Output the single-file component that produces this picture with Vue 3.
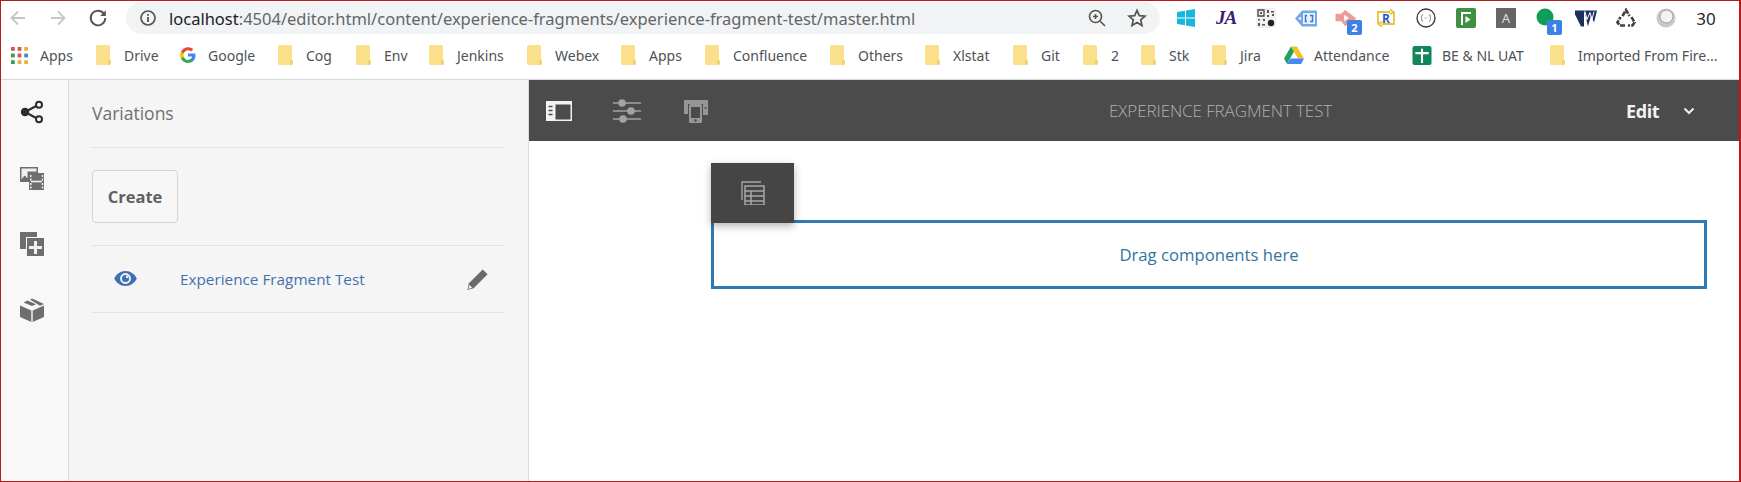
<script setup>
const bookmarks = [
  { label: 'Apps', icon: 'apps', w: 34 },
  { label: 'Drive', w: 34 },
  { label: 'Google', icon: 'g', w: 48 },
  { label: 'Cog', w: 28 },
  { label: 'Env', w: 23 },
  { label: 'Jenkins', w: 48 },
  { label: 'Webex', w: 44 },
  { label: 'Apps', w: 34 },
  { label: 'Confluence', w: 75 },
  { label: 'Others', w: 45 },
  { label: 'Xlstat', w: 38 },
  { label: 'Git', w: 20 },
  { label: '2', w: 8 },
  { label: 'Stk', w: 21 },
  { label: 'Jira', w: 22 },
  { label: 'Attendance', icon: 'drive', w: 76 },
  { label: 'BE & NL UAT', icon: 'sheet', w: 86 },
  { label: 'Imported From Fire...', w: 142 }
]
</script>

<template>
  <div class="frame">
    <header class="toolbar">
      <div class="nav">
        <svg class="nav-icon" viewBox="0 0 20 20"><path d="M17 10H4M10 3.5 3.5 10l6.500 6.500" fill="none" stroke="#c4c7c9" stroke-width="1.800" /></svg>
        <svg class="nav-icon" viewBox="0 0 20 20"><path d="M3 10h13M10 3.500l6.500 6.500-6.500 6.500" fill="none" stroke="#c4c7c9" stroke-width="1.800" /></svg>
        <svg class="nav-icon" viewBox="0 0 20 20"><path d="M16.400 6.500A7.300 7.300 0 1 0 17.300 10" fill="none" stroke="#555" stroke-width="1.900" /><path d="M17.800 2.300v5.600h-5.600z" fill="#555" /></svg>
      </div>
      <div class="omnibox">
        <svg class="info" viewBox="0 0 18 18"><circle cx="9" cy="9" r="7" fill="none" stroke="#555" stroke-width="1.700" /><path d="M9 8v5M9 5v1.800" stroke="#555" stroke-width="1.800" /></svg>
        <span class="url"><b>localhost</b>:4504/editor.html/content/experience-fragments/experience-fragment-test/master.html</span>
        <svg class="zoom-icon" viewBox="0 0 20 20"><circle cx="8.500" cy="8.500" r="6" fill="none" stroke="#555" stroke-width="1.600" /><path d="m13 13 5 5M6 8.500h5M8.500 6v5" stroke="#555" stroke-width="1.600" /></svg>
        <svg class="star" viewBox="0 0 20 20"><path d="m10 2.300 2.300 5.300 5.700.5-4.300 3.800 1.300 5.600-5-3-5 3 1.300-5.600L2 8.100l5.700-.5z" fill="none" stroke="#555" stroke-width="1.700" /></svg>
      </div>
      <div class="extensions">
        <span class="ext"><svg viewBox="0 0 20 20" class="e20"><path d="m1 4 8-1.300V9.500H1zM10 2.500 19 1v8.500h-9zM1 10.500h8v6.800L1 16zM10 10.500h9V19l-9-1.500z" fill="#19b6e0" /></svg></span>
        <span class="ext"><span class="ja">JA</span></span>
        <span class="ext"><svg viewBox="0 0 20 20" class="e20"><rect width="20" height="20" rx="2" fill="#f0f0f0" /><path d="M2 2h6v6H2z" fill="none" stroke="#444" stroke-width="1.300" /><path d="M4 4h2v2H4zM11 2h2v3h-2zM15 3h3v1.500h-3zM16 6h2v2h-2zM11 7h2v2h-2zM2 11h2v1.500H2zM7 11h2v2H7zM2 15h2v3H2zM6 16h3v1.500H6z" fill="#555" /><circle cx="15" cy="15" r="3.200" fill="#222" /></svg></span>
        <span class="ext"><svg viewBox="0 0 22 18" class="e22"><path d="M7 1h14a1 1 0 0 1 1 1v14a1 1 0 0 1-1 1H7L0 9z" fill="#74a9e8" /><rect x="8" y="3.500" width="12" height="11" fill="#e8f0fb" /><path d="M12 6h-1.500v6H12M15 6h2.500v6H15" fill="none" stroke="#3a78cc" stroke-width="1.500" /><circle cx="5" cy="9" r="1.200" fill="#fff" /></svg></span>
        <span class="ext"><svg viewBox="0 0 22 20" class="e22"><path d="M0 5h6l4-4 12 9-12 8-4-5H0z" fill="#ee9a98" /><path d="M9 6v7l5-3.500z" fill="#fff" /></svg><span class="badge">2</span></span>
        <span class="ext"><svg viewBox="0 0 20 20" class="e20"><path d="M2 16V4h12M14 1.500 17.500 4 14 6.500" fill="none" stroke="#e7c43a" stroke-width="1.800" /><path d="M18 4v12H6M6 13.500 2.500 16 6 18.500" fill="none" stroke="#e7c43a" stroke-width="1.800" /></svg><span class="r-letter">R</span></span>
        <span class="ext"><svg viewBox="0 0 20 20" class="e20"><circle cx="10" cy="10" r="9" fill="#fff" stroke="#333" stroke-width="1.300" /><path d="M7 6.500c-1.500 0-1 3.500-2 3.500 1 0 .5 3.500 2 3.500M13 6.500c1.500 0 1 3.500 2 3.500-1 0-.5 3.500-2 3.500M8.500 10h.8M10.500 10h.8" fill="none" stroke="#666" stroke-width=".9" /></svg></span>
        <span class="ext"><svg viewBox="0 0 20 20" class="e20"><rect width="20" height="20" rx="2" fill="#3d9140" /><path d="M5 17V4h10v2H7v11zM9.500 8v7l5-3.500z" fill="#fff" /></svg></span>
        <span class="ext"><span class="a-box">A</span></span>
        <span class="ext"><svg viewBox="0 0 20 20" class="e20"><circle cx="9" cy="9" r="8.500" fill="#0f9d58" /></svg><span class="badge">1</span></span>
        <span class="ext"><svg viewBox="0 0 22 18" class="e22"><path d="M0 1h9v16H6L0 5zM9 1h13l-3 12-3-7-3 11-3-13z" fill="#1d2f5f" /><path d="m10 2 2 8 3-7 2 7 2-8" fill="none" stroke="#fff" stroke-width="1" /></svg></span>
        <span class="ext"><svg viewBox="0 0 20 20" class="e20"><path d="M6.500 8 10 2l3.500 6M15.500 9l3 5.500-2 3H12M9 17.500H4l-2.500-3 3-5.500" fill="none" stroke="#3f3f3f" stroke-width="2.600" stroke-dasharray="5 1.200" /></svg></span>
        <span class="ext"><svg viewBox="0 0 20 20" class="e20"><circle cx="10" cy="10" r="9.500" fill="#c9c9c9" /><circle cx="10.500" cy="8.500" r="6.500" fill="#f3f3f3" stroke="#9f9f9f" /></svg></span>
        <span class="ext count">30</span>
      </div>
    </header>

    <nav class="bookmarks">
      <div v-for="(b, i) in bookmarks" :key="i" class="bookmark">
        <svg v-if="b.icon === 'apps'" class="bm-icon apps" viewBox="0 0 18 18">
          <path d="M0 0h4v4H0z" fill="#d9534a" /><path d="M7 0h4v4H7z" fill="#d9534a" /><path d="M14 0h4v4h-4z" fill="#e8b23a" />
          <path d="M0 7h4v4H0z" fill="#3b9a57" /><path d="M7 7h4v4H7z" fill="#d9534a" /><path d="M14 7h4v4h-4z" fill="#4a84d6" />
          <path d="M0 14h4v4H0z" fill="#3b9a57" /><path d="M7 14h4v4H7z" fill="#e8b23a" /><path d="M14 14h4v4h-4z" fill="#e8b23a" />
        </svg>
        <svg v-else-if="b.icon === 'g'" class="bm-icon" viewBox="0 0 16 16">
          <path d="M15.500 8.200c0-.6-.1-1.100-.2-1.600H8v3h4.200c-.2 1-.7 1.800-1.600 2.400v2h2.600c1.500-1.400 2.300-3.400 2.300-5.800z" fill="#4285f4" />
          <path d="M8 16c2.100 0 3.900-.7 5.200-1.900l-2.600-2c-.7.500-1.600.8-2.600.8-2 0-3.700-1.400-4.300-3.200H1v2.100C2.300 14.300 5 16 8 16z" fill="#34a853" />
          <path d="M3.700 9.700a4.800 4.800 0 0 1 0-3.100V4.500H1a8 8 0 0 0 0 7.300z" fill="#fbbc05" />
          <path d="M8 3.200c1.200 0 2.200.4 3 1.200l2.300-2.300A8 8 0 0 0 1 4.500l2.700 2.100C4.300 4.600 6 3.200 8 3.200z" fill="#ea4335" />
        </svg>
        <svg v-else-if="b.icon === 'drive'" class="bm-icon drive" viewBox="0 0 20 18">
          <path d="M7 0h6l7 12h-6z" fill="#f5c02c" /><path d="M7 0 0 12l3 5.500L10 5z" fill="#1ea362" /><path d="M6.500 12H20l-3 5.500H3z" fill="#4688f1" />
        </svg>
        <svg v-else-if="b.icon === 'sheet'" class="bm-icon drive" viewBox="0 0 20 20">
          <rect width="20" height="20" rx="2" fill="#11865a" /><path d="M3 7.500h14M10 3v15" stroke="#fff" stroke-width="2.200" />
        </svg>
        <svg v-else class="bm-icon" viewBox="0 0 16 20">
          <path d="M1.500 0h11A1.500 1.500 0 0 1 14 1.500V20H1.500A1.500 1.500 0 0 1 0 18.500v-17A1.500 1.500 0 0 1 1.500 0z" fill="#fbe08c" />
          <path d="M12 20v-3.500a1.500 1.500 0 0 1 3 0V18a2 2 0 0 1-2 2z" fill="#f3cf6b" />
        </svg>
        <span class="bm-label" :style="{ width: b.w + 'px' }">{{ b.label }}</span>
      </div>
    </nav>

    <main class="workspace">
      <aside class="rail">
        <svg class="rail-icon" viewBox="0 0 24 24"><path d="M5 12 18 5M5 12l13 7" stroke="#2c2c2c" stroke-width="2" /><circle cx="5" cy="12" r="4.200" fill="#2c2c2c" /><circle cx="19" cy="4.700" r="3" fill="#f8f8f8" stroke="#2c2c2c" stroke-width="2" /><circle cx="19" cy="19.300" r="3" fill="#f8f8f8" stroke="#2c2c2c" stroke-width="2" /></svg>
        <svg class="rail-icon" viewBox="0 0 24 24"><path d="M0 1h18v6H9v9H0z" fill="#6e6e6e" /><path d="M1.500 2.500h15v3h-9v7l-3-3-3 4z" fill="#f1f1f1" /><path d="M2 14l3-4 3 3v2H2z" fill="#6e6e6e" /><path d="M9 7h15v17H9z" fill="#6e6e6e" /><path d="M11 14.700h11v1.600H11z" fill="#f1f1f1" /><path d="M10 9h1.500v2H10zM10 12.500h1.500v2H10zM10 17h1.500v2H10zM10 20.500h1.500v2H10zM21.800 9h1.400v2h-1.400zM21.800 12.500h1.400v2h-1.400zM21.800 17h1.400v2h-1.400zM21.800 20.500h1.400v2h-1.400z" fill="#f1f1f1" /></svg>
        <svg class="rail-icon" viewBox="0 0 24 24"><path d="M0 0h17v5H6v12H0z" fill="#6e6e6e" /><path d="M7 6h17v18H7z" fill="#6e6e6e" /><path d="M14 9h3v5h5v3h-5v5h-3v-5H9v-3h5z" fill="#f1f1f1" /></svg>
        <svg class="rail-icon" viewBox="0 0 24 24"><path d="M11.300 12.500 0 7.500V19l11.300 5zM12.700 12.500V24L24 19V7.500z" fill="#6e6e6e" /><path d="M7.500 2.600 16 6.300l-4 1.800-8.500-3.700zM10 1.500 12 .6l12 5.300-4 1.800z" fill="#6e6e6e" /></svg>
      </aside>

      <section class="panel">
        <h2 class="panel-title">Variations</h2>
        <button class="create">Create</button>
        <div class="variation">
          <svg class="eye" viewBox="0 0 24 16"><path d="M12 0C6.500 0 2 3.500 0 8c2 4.500 6.500 8 12 8s10-3.500 12-8c-2-4.500-6.500-8-12-8z" fill="#3f6fb5" /><circle cx="12" cy="8" r="5.800" fill="#f5f5f5" /><circle cx="12" cy="8" r="3.800" fill="#3f6fb5" /><circle cx="13.800" cy="6.200" r="1.400" fill="#f5f5f5" /></svg>
          <span class="variation-name">Experience Fragment Test</span>
          <svg class="pencil" viewBox="0 0 24 24"><path d="M17.500 1.500 22.500 6.500 8 21l-6.500 2L3 16z" fill="#6a6a6a" /><path d="M3.500 17.500 6.500 20.500 2.500 22z" fill="#eee" /></svg>
        </div>
      </section>

      <section class="editor">
        <div class="editor-bar">
          <svg class="bar-icon" viewBox="0 0 26 20"><rect width="26" height="20" fill="#f2f2f2" /><rect x="9.500" y="3.500" width="15" height="15" fill="#4b4b4b" /><path d="M2.500 5.500h4M2.500 9.500h4M2.500 13.500h4" stroke="#4b4b4b" stroke-width="1.500" /></svg>
          <svg class="bar-icon dim" viewBox="0 0 28 24"><path d="M0 4h28M0 12h28M0 20h28" stroke="#a3a3a3" stroke-width="1.300" /><circle cx="9" cy="4" r="3.800" fill="#a3a3a3" /><circle cx="18" cy="12" r="3.800" fill="#a3a3a3" /><circle cx="10" cy="20" r="3.800" fill="#a3a3a3" /></svg>
          <svg class="bar-icon dim" viewBox="0 0 26 24"><path d="M2 1h22a1 1 0 0 1 1 1v14h-5V5H5v10H1V2a1 1 0 0 1 1-1z" fill="#969696" /><rect x="6" y="5" width="13" height="19" rx="1.500" fill="#969696" /><rect x="8" y="8" width="9" height="11" fill="#4b4b4b" /><circle cx="12.500" cy="21.500" r="1.200" fill="#4b4b4b" /><circle cx="22.500" cy="9" r="1" fill="#4b4b4b" /></svg>
          <span class="bar-title">EXPERIENCE FRAGMENT TEST</span>
          <span class="bar-mode">Edit</span>
          <svg class="chevron" viewBox="0 0 12 8"><path d="M1.500 1.500 6 6l4.500-4.500" fill="none" stroke="#f2f2f2" stroke-width="2" /></svg>
        </div>
        <div class="canvas">
          <div class="layout-tab">
            <svg viewBox="0 0 24 24" class="tab-icon"><path d="M1 19V1h19" fill="none" stroke="#a8a8a8" stroke-width="1.300" /><path d="M3 4h20v20H3z" fill="#454545" /><path d="M4 5h19v19H4zM4 10h19M4 15h19M4 20h19M10 10v14" fill="none" stroke="#a8a8a8" stroke-width="1.500" /></svg>
          </div>
          <div class="dropzone">Drag components here</div>
        </div>
      </section>
    </main>
  </div>
</template>

<style>
html, body { margin: 0; background: #fff; overflow: hidden; }
</style>

<style scoped>
.frame {
  box-sizing: border-box;
  width: 1741px;
  height: 482px;
  border: 1px solid #bb1a1a;
  border-right-width: 2px;
  display: flex;
  flex-direction: column;
  overflow: hidden;
  font-family: "Open Sans", "Noto Sans", sans-serif;
  background: #fff;
}
.toolbar {
  height: 34px;
  flex: none;
  display: flex;
  align-items: center;
  position: relative;
}
.nav {
  width: 125px;
  flex: none;
  display: flex;
  gap: 20px;
  padding-left: 7px;
  box-sizing: border-box;
}
.nav-icon { width: 20px; height: 20px; }
.omnibox {
  width: 1034px;
  height: 32px;
  flex: none;
  background: #f1f3f4;
  border-radius: 16px;
  display: flex;
  align-items: center;
  box-sizing: border-box;
  padding-left: 13px;
}
.info { width: 18px; height: 18px; flex: none; }
.url {
  margin-left: 12px;
  width: 744px;
  flex: none;
  font-family: "Noto Sans", sans-serif;
  font-size: 16.500px;
  color: #62666a;
  white-space: nowrap;
}
.url b { font-weight: 400; color: #202124; }
.zoom-icon { width: 20px; height: 20px; margin-left: 174px; flex: none; }
.star { width: 20px; height: 20px; margin-left: 20px; flex: none; }
.extensions {
  margin-left: 6px;
  display: flex;
  align-items: center;
}
.ext {
  width: 40px;
  height: 30px;
  flex: none;
  display: flex;
  align-items: center;
  justify-content: center;
  position: relative;
}
.e20 { width: 20px; height: 20px; }
.e22 { width: 22px; height: 19px; }
.ja { font: italic 700 19px "Liberation Serif", serif; color: #3b1a78; letter-spacing: -1px; }
.badge {
  position: absolute;
  left: 21px;
  top: 17px;
  width: 15px;
  height: 15px;
  border-radius: 2px;
  background: #3d80e6;
  color: #fff;
  font: 700 11px/15px "Noto Sans", sans-serif;
  text-align: center;
}
.r-letter {
  position: absolute;
  font: 700 12px "Open Sans", sans-serif;
  color: #2a5cc4;
}
.a-box {
  width: 20px;
  height: 20px;
  background: #666;
  color: #ddd;
  font: 400 13px/20px "Noto Sans", sans-serif;
  text-align: center;
}
.count { font: 400 17px "Noto Sans", sans-serif; color: #2a2a2a; }

.bookmarks {
  height: 45px;
  box-sizing: border-box;
  flex: none;
  display: flex;
  align-items: center;
  gap: 22px;
  padding: 0 0 4px 10px;
  border-bottom: 1px solid #d8d8d8;
}
.bookmark { display: flex; align-items: center; gap: 12px; flex: none; }
.bm-icon { width: 16px; height: 20px; flex: none; }
.bm-icon.apps { width: 17px; height: 17px; }
.bm-icon.drive { width: 20px; height: 19px; margin-right: -2px; }
.bm-label {
  font-family: "Noto Sans", sans-serif;
  font-size: 14px;
  color: #4e5256;
  white-space: nowrap;
}

.workspace {
  flex: 1;
  min-height: 0;
  display: flex;
}
.rail {
  width: 68px;
  flex: none;
  box-sizing: border-box;
  background: #f8f8f8;
  border-right: 1px solid #dcdcdc;
  display: flex;
  flex-direction: column;
  align-items: center;
  gap: 42px;
  padding: 20px 6px 0 0;
}
.rail-icon { width: 24px; height: 24px; flex: none; }
.panel {
  width: 460px;
  flex: none;
  box-sizing: border-box;
  background: #f5f5f5;
  border-right: 1px solid #dcdcdc;
  padding: 0 23px;
}
.panel-title {
  margin: 0;
  height: 68px;
  line-height: 66px;
  box-sizing: border-box;
  font-size: 17.500px;
  font-weight: 400;
  color: #707070;
  border-bottom: 1px solid #e2e2e2;
}
.create {
  display: block;
  margin: 22px 0;
  width: 86px;
  height: 53px;
  box-sizing: border-box;
  background: #f7f7f7;
  border: 1px solid #d4d4d4;
  border-radius: 4px;
  font-family: "Open Sans", sans-serif;
  font-size: 16.500px;
  font-weight: 700;
  color: #5f5f5f;
  padding: 0;
}
.variation {
  height: 68px;
  box-sizing: border-box;
  border-top: 1px solid #e2e2e2;
  border-bottom: 1px solid #e2e2e2;
  display: flex;
  align-items: center;
}
.eye { width: 23px; height: 15px; margin-left: 22px; margin-top: -2px; flex: none; }
.variation-name {
  margin-left: 43px;
  width: 276px;
  flex: none;
  font-size: 15.300px;
  color: #4470ad;
  white-space: nowrap;
}
.pencil { width: 23px; height: 23px; flex: none; margin-left: 10px; }

.editor { flex: 1; min-width: 0; }
.editor-bar {
  height: 61px;
  background: #4b4b4b;
  display: flex;
  align-items: center;
  position: relative;
  padding-left: 17px;
  box-sizing: border-box;
}
.bar-icon { width: 26px; height: 20px; flex: none; }
.bar-icon.dim { width: 28px; height: 24px; margin-left: 41px; }
.bar-title {
  margin-left: 399px;
  width: 517px;
  flex: none;
  font-size: 17px;
  font-weight: 300;
  letter-spacing: -0.1px;
  color: #b0b0b0;
  white-space: nowrap;
}
.bar-mode { font-size: 18px; font-weight: 700; color: #f2f2f2; letter-spacing: -0.4px; }
.chevron { width: 12px; height: 8px; margin-left: 24px; flex: none; }
.canvas { padding: 22px 32px 0 182px; }
.layout-tab {
  width: 83px;
  height: 60px;
  background: #454545;
  box-shadow: 0 3px 8px rgba(0, 0, 0, 0.3);
  margin-bottom: -3px;
  position: relative;
  z-index: 1;
  display: flex;
  align-items: center;
  justify-content: center;
}
.tab-icon { width: 24px; height: 24px; }
.dropzone {
  height: 69px;
  box-sizing: border-box;
  border: 3px solid #2f7ab5;
  display: flex;
  align-items: center;
  justify-content: center;
  font-size: 16.700px;
  color: #31759f;
}
</style>
